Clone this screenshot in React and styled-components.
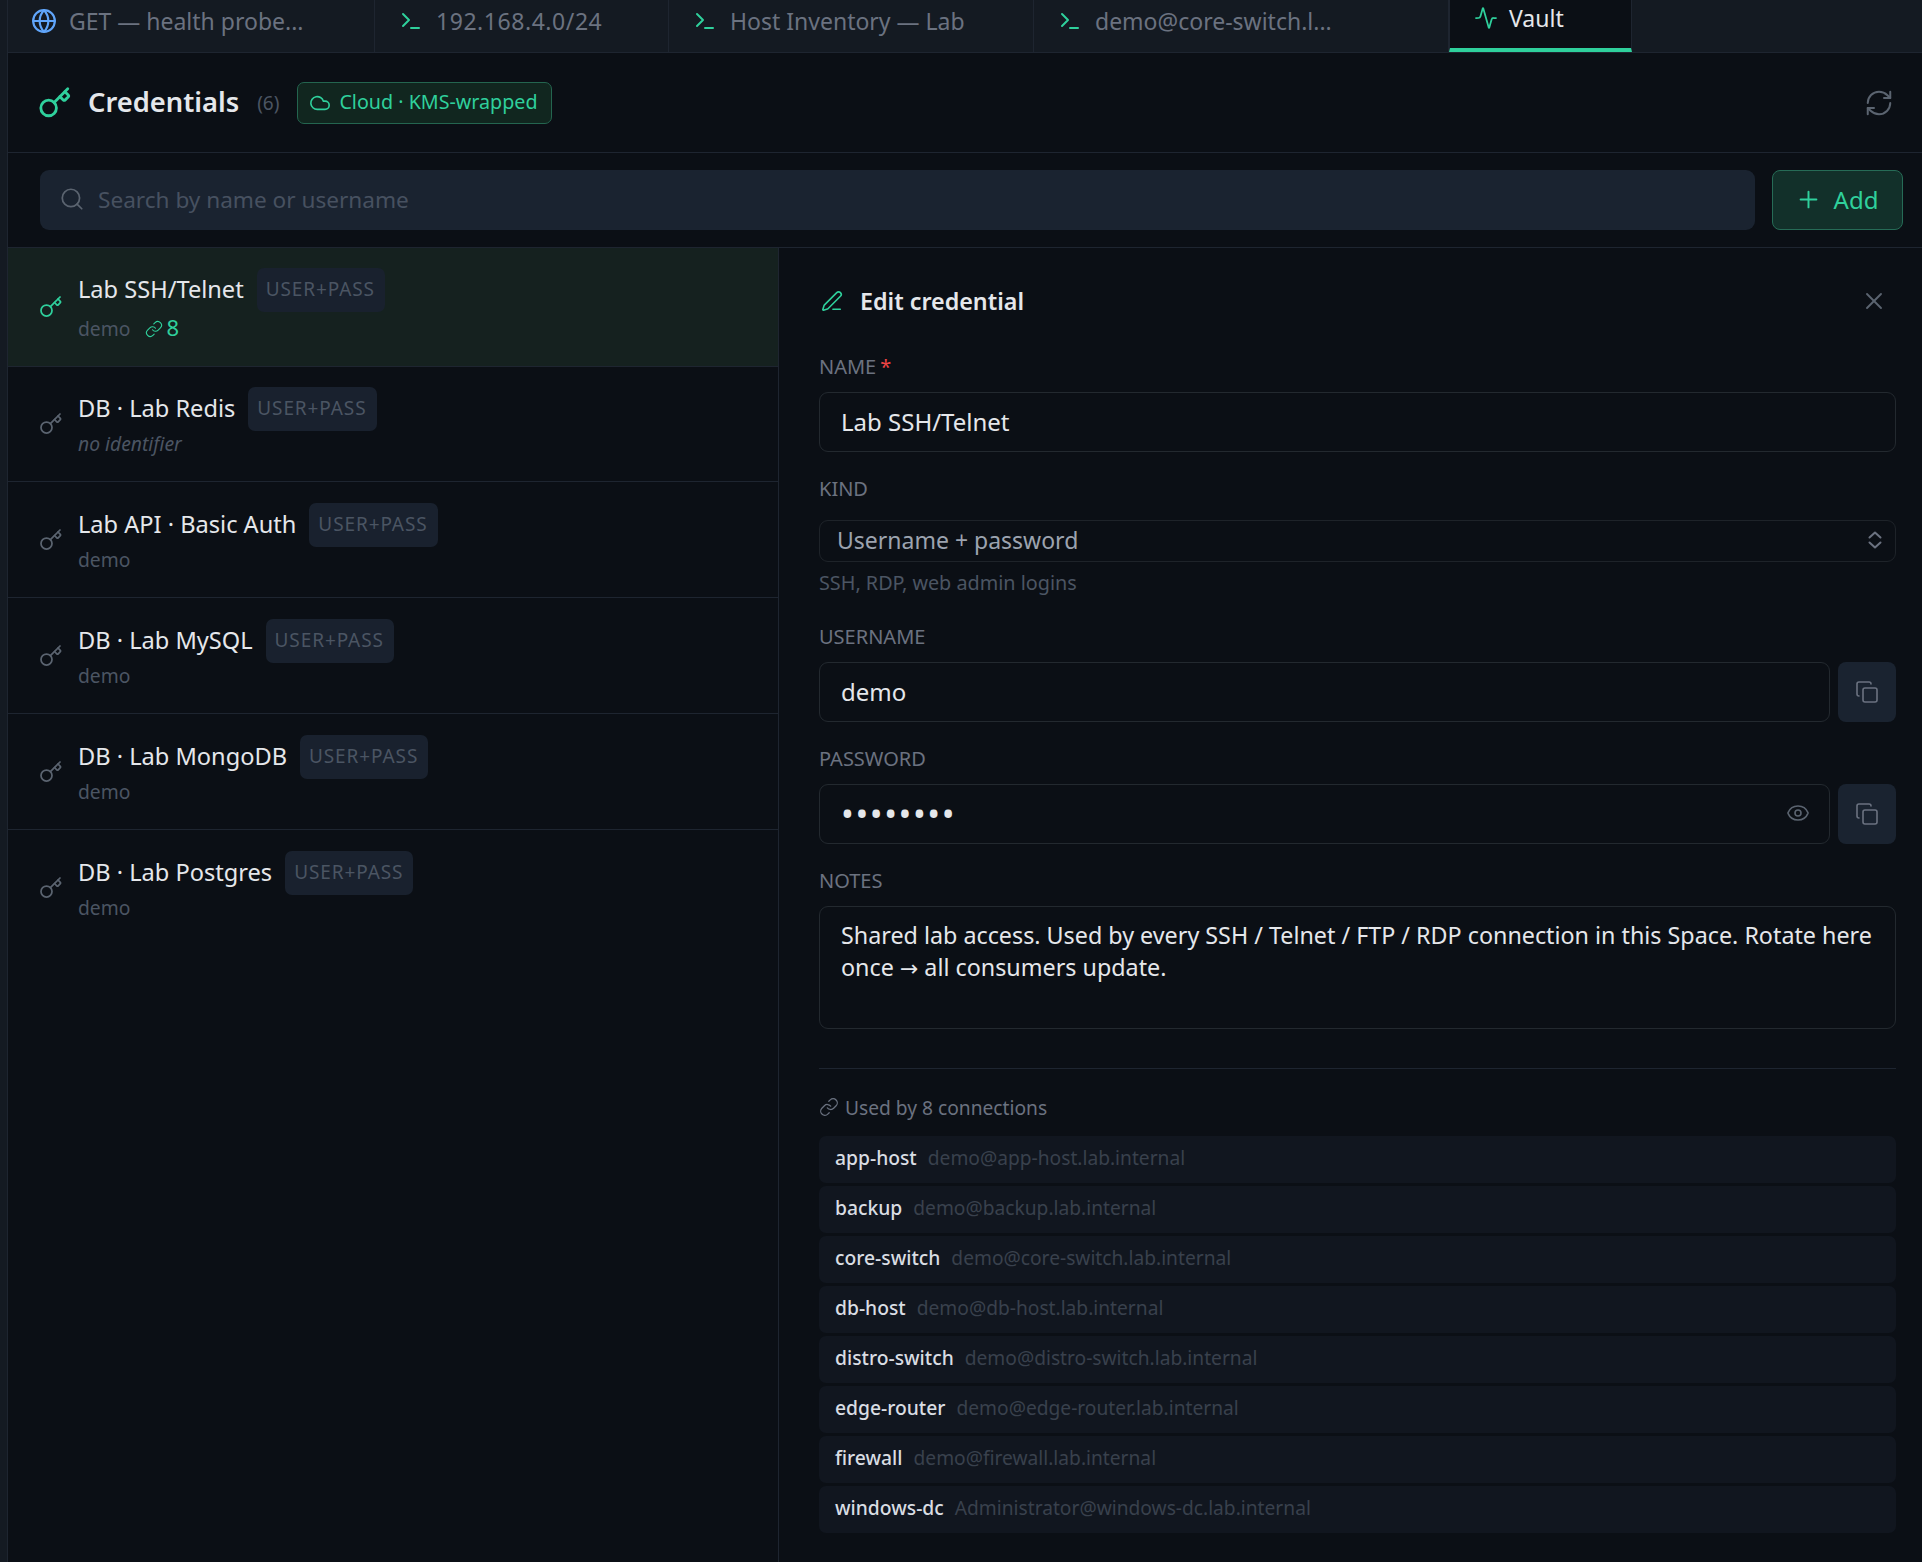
import React from 'react';
import styled, { createGlobalStyle } from 'styled-components';
import {
  Globe, Terminal, Activity, Key, Cloud, RefreshCw, Search, Plus,
  PenLine, X, Copy, Eye, Link,
} from 'lucide-react';

const GREEN = '#2fd09c';

const GlobalStyle = createGlobalStyle`
  html, body { margin: 0; background: #0b0f15; }
  body { font-family: "Noto Sans", "Open Sans", sans-serif; color: #e5e7eb; }
  * { box-sizing: border-box; }
`;

const Shell = styled.div`
  display: flex;
  min-height: 1562px;
`;
const Rail = styled.div`
  width: 8px;
  flex: none;
  background: #141a22;
  border-right: 1px solid #1e2530;
`;
const Main = styled.div`
  flex: 1;
  min-width: 0;
  display: flex;
  flex-direction: column;
`;

const TabBar = styled.div`
  display: flex;
  height: 53px;
  background: #141a22;
  border-bottom: 1px solid #1e2530;
`;
const Tab = styled.div`
  width: ${p => p.$width}px;
  height: 52px;
  display: flex;
  align-items: center;
  gap: ${p => (p.$active ? '10px' : '12px')};
  padding: 0 0 ${p => (p.$active ? '12px' : '10px')} 23px;
  font-size: 23px;
  white-space: nowrap;
  color: ${p => (p.$active ? '#e5e7eb' : '#6b7280')};
  border-right: 1px solid #1e2530;
  ${p => p.$active && `
    background: #0b0f15;
    border-left: 1px solid #1e2530;
    border-bottom: 4px solid ${GREEN};
  `}
`;
const TabIcon = styled.span`
  width: 26px;
  flex: none;
  display: flex;
  justify-content: center;
  color: ${p => p.$color};
`;
const TabTitle = styled.span`
  letter-spacing: ${p => p.$spacing || 0}px;
`;

const Header = styled.div`
  height: 100px;
  display: flex;
  align-items: center;
  padding: 0 28px 0 30px;
  border-bottom: 1px solid #1e2530;
`;
const Title = styled.h1`
  margin: 0 0 2px 16px;
  font-size: 27.3px;
  font-weight: 600;
  color: #e5e7eb;
`;
const Count = styled.span`
  margin-left: 18px;
  font-size: 19px;
  color: #4b5563;
`;
const CloudBadge = styled.div`
  margin-left: 18px;
  height: 42px;
  display: flex;
  align-items: center;
  gap: 8px;
  padding: 0 13px 2px 11px;
  font-size: 19.7px;
  color: ${GREEN};
  background: #11261f;
  border: 1.5px solid #24654f;
  border-radius: 7px;
  svg { margin-top: 3px; }
`;
const Refresh = styled.div`
  margin-left: auto;
  display: flex;
  color: #5b6470;
`;

const Toolbar = styled.div`
  height: 95px;
  display: flex;
  align-items: center;
  gap: 17px;
  padding: 0 19px 0 32px;
  border-bottom: 1px solid #1e2530;
`;
const SearchBox = styled.div`
  flex: 1;
  height: 60px;
  display: flex;
  align-items: center;
  gap: 13px;
  padding: 0 0 2px 19px;
  font-size: 22.6px;
  color: #475160;
  background: #1a2330;
  border-radius: 9px;
`;
const AddButton = styled.button`
  width: 131px;
  height: 60px;
  display: flex;
  align-items: center;
  justify-content: center;
  gap: 12px;
  padding: 0 2px 2px 0;
  font: inherit;
  font-size: 24px;
  color: ${GREEN};
  background: #12302a;
  border: 1.5px solid #266b56;
  border-radius: 8px;
`;

const Columns = styled.div`
  flex: 1;
  display: flex;
`;
const List = styled.div`
  width: 771px;
  flex: none;
  border-right: 1px solid #1e2530;
`;
const ListRow = styled.div`
  height: ${p => p.$height}px;
  display: flex;
  align-items: center;
  gap: 16px;
  padding-left: 31px;
  background: ${p => (p.$active ? '#15211f' : 'transparent')};
  border-bottom: ${p => (p.$last ? 'none' : '1px solid #1e2530')};
  color: ${p => (p.$active ? GREEN : '#5b6470')};
`;
const RowBody = styled.div`
  align-self: flex-start;
  padding-top: ${p => p.$top}px;
  margin-left: -1px;
`;
const NameLine = styled.div`
  height: 44px;
  display: flex;
  align-items: center;
  gap: 13px;
  font-size: 23.6px;
  color: #e5e7eb;
`;
const RowName = styled.span`
  margin-bottom: 2px;
`;
const KindBadge = styled.span`
  height: 44px;
  display: flex;
  align-items: center;
  padding: 0 10px 2px 9px;
  font-size: 19px;
  letter-spacing: 0.9px;
  color: #4b5563;
  background: #19212e;
  border-radius: 7px;
`;
const SubLine = styled.div`
  margin-top: ${p => (p.$linked ? '3px' : '-1px')};
  height: 26px;
  display: flex;
  align-items: center;
  font-size: 19.3px;
  font-style: ${p => (p.$italic ? 'italic' : 'normal')};
  color: #4b5563;
`;
const LinkCount = styled.span`
  margin-left: 15px;
  display: flex;
  align-items: center;
  gap: 3px;
  font-size: 22px;
  line-height: 22px;
  padding-bottom: 3px;
  color: ${GREEN};
  svg { margin-top: 4px; }
`;

const Detail = styled.div`
  flex: 1;
  min-width: 0;
  padding: 37px 26px 0 40px;
`;
const DetailHead = styled.div`
  height: 32px;
  display: flex;
  align-items: center;
  gap: 17px;
  margin-bottom: 37px;
  color: ${GREEN};
`;
const DetailTitle = styled.h2`
  margin: 0;
  font-size: 23.3px;
  font-weight: 600;
  color: #e5e7eb;
`;
const PenIcon = styled.span`
  display: flex;
  margin-left: 2px;
`;
const CloseButton = styled.div`
  margin-left: auto;
  margin-right: 8px;
  display: flex;
  color: #5b6470;
`;
const Form = styled.div`
  display: flex;
  flex-direction: column;
  gap: 24px;
`;
const Label = styled.div`
  height: 26px;
  line-height: 26px;
  margin-bottom: 12px;
  font-size: 20px;
  color: #6b7280;
`;
const Required = styled.span`
  margin-left: 4px;
  color: #ef4444;
`;
const Input = styled.div`
  flex: 1;
  height: 60px;
  display: flex;
  align-items: center;
  padding: 0 19px 2px 21px;
  font-size: 24px;
  color: #e5e7eb;
  border: 1.5px solid #23292f;
  border-radius: 9px;
`;
const Dots = styled.span`
  font-size: 34px;
  line-height: 1;
  letter-spacing: 1.6px;
`;
const EyeButton = styled.span`
  margin-left: auto;
  display: flex;
  color: #5b6470;
`;
const Select = styled.div`
  margin-top: 18px;
  height: 42px;
  display: flex;
  align-items: center;
  justify-content: space-between;
  padding: 0 13px 2px 17px;
  font-size: 23px;
  color: #9ca3af;
  border: 1.5px solid #1e2329;
  border-radius: 9px;
`;
const Hint = styled.div`
  margin: 8px 0 4px;
  height: 26px;
  line-height: 26px;
  font-size: 19.8px;
  color: #4b5563;
`;
const InputRow = styled.div`
  display: flex;
  gap: 8px;
`;
const CopyButton = styled.div`
  width: 58px;
  height: 60px;
  flex: none;
  display: flex;
  align-items: center;
  justify-content: center;
  color: #6b7280;
  background: #1a2330;
  border-radius: 8px;
`;
const Textarea = styled.div`
  height: 123px;
  padding: 12px 19px 0 21px;
  font-size: 23.3px;
  line-height: 32px;
  white-space: nowrap;
  color: #e5e7eb;
  border: 1.5px solid #23292f;
  border-radius: 9px;
`;
const Arrow = styled.span`
  font-family: "DejaVu Sans", sans-serif;
  font-size: 22px;
`;
const Divider = styled.hr`
  margin: 39px 0 25px;
  border: 0;
  border-top: 1.5px solid #1e2530;
`;
const UsedBy = styled.div`
  height: 26px;
  display: flex;
  align-items: center;
  gap: 6px;
  margin-bottom: 16px;
  font-size: 19.2px;
  color: #6b7280;
`;
const Connections = styled.div`
  display: flex;
  flex-direction: column;
  gap: 3px;
`;
const Connection = styled.div`
  height: 47px;
  display: flex;
  align-items: center;
  gap: 11px;
  padding: 0 0 4px 16px;
  background: #11161f;
  border-radius: 7px;
`;
const ConnName = styled.span`
  font-size: 19.3px;
  font-weight: 500;
  color: #d9dde3;
`;
const ConnHost = styled.span`
  font-size: 19.2px;
  color: #39414d;
`;

const tabs = [
  { title: 'GET — health probe...', width: 367, Icon: Globe, size: 26, color: '#60a5fa' },
  { title: '192.168.4.0/24', width: 294, Icon: Terminal, size: 24, color: GREEN, spacing: 0.55 },
  { title: 'Host Inventory — Lab', width: 365, Icon: Terminal, size: 24, color: GREEN },
  { title: 'demo@core-switch.l...', width: 415, Icon: Terminal, size: 24, color: GREEN },
  { title: 'Vault', width: 183, Icon: Activity, size: 24, color: GREEN, active: true },
];

const credentials = [
  { name: 'Lab SSH/Telnet', sub: 'demo', links: 8, height: 119, top: 20 },
  { name: 'DB · Lab Redis', sub: 'no identifier', italic: true, height: 115, top: 20 },
  { name: 'Lab API · Basic Auth', sub: 'demo', height: 116, top: 21 },
  { name: 'DB · Lab MySQL', sub: 'demo', height: 116, top: 21 },
  { name: 'DB · Lab MongoDB', sub: 'demo', height: 116, top: 21 },
  { name: 'DB · Lab Postgres', sub: 'demo', height: 116, top: 21, last: true },
];

const connections = [
  ['app-host', 'demo@app-host.lab.internal'],
  ['backup', 'demo@backup.lab.internal'],
  ['core-switch', 'demo@core-switch.lab.internal'],
  ['db-host', 'demo@db-host.lab.internal'],
  ['distro-switch', 'demo@distro-switch.lab.internal'],
  ['edge-router', 'demo@edge-router.lab.internal'],
  ['firewall', 'demo@firewall.lab.internal'],
  ['windows-dc', 'Administrator@windows-dc.lab.internal'],
];

function UpDown() {
  return (
    <svg width="14" height="18" viewBox="0 0 14 18" fill="none" stroke="#6b7280" strokeWidth="2" strokeLinecap="round" strokeLinejoin="round">
      <path d="M1.5 6.5 7 1.5l5.500 5" />
      <path d="M1.500 11.500 7 16.500l5.500-5" />
    </svg>
  );
}

export default function App() {
  return (
    <Shell>
      <GlobalStyle />
      <Rail />
      <Main>
        <TabBar>
          {tabs.map(t => (
            <Tab key={t.title} $width={t.width} $active={t.active}>
              <TabIcon $color={t.color}><t.Icon size={t.size} strokeWidth={t.active ? 1.75 : 2} /></TabIcon>
              <TabTitle $spacing={t.spacing}>{t.title}</TabTitle>
            </Tab>
          ))}
        </TabBar>

        <Header>
          <Key size={34} color={GREEN} strokeWidth={2} />
          <Title>Credentials</Title>
          <Count>(6)</Count>
          <CloudBadge><Cloud size={22} strokeWidth={1.75} />Cloud · KMS-wrapped</CloudBadge>
          <Refresh><RefreshCw size={30} strokeWidth={1.6} /></Refresh>
        </Header>

        <Toolbar>
          <SearchBox><Search size={26} strokeWidth={1.6} color="#5b6470" />Search by name or username</SearchBox>
          <AddButton><Plus size={27} strokeWidth={1.75} />Add</AddButton>
        </Toolbar>

        <Columns>
          <List>
            {credentials.map((c, i) => (
              <ListRow key={c.name} $height={c.height} $active={i === 0} $last={c.last}>
                <Key size={24} strokeWidth={1.75} />
                <RowBody $top={c.top}>
                  <NameLine><RowName>{c.name}</RowName><KindBadge>USER+PASS</KindBadge></NameLine>
                  <SubLine $italic={c.italic} $linked={c.links}>
                    {c.sub}
                    {c.links && <LinkCount><Link size={18} strokeWidth={1.5} />{c.links}</LinkCount>}
                  </SubLine>
                </RowBody>
              </ListRow>
            ))}
          </List>

          <Detail>
            <DetailHead>
              <PenIcon><PenLine size={22} strokeWidth={1.75} /></PenIcon>
              <DetailTitle>Edit credential</DetailTitle>
              <CloseButton><X size={28} strokeWidth={1.6} /></CloseButton>
            </DetailHead>

            <Form>
              <div>
                <Label>NAME<Required>*</Required></Label>
                <Input>Lab SSH/Telnet</Input>
              </div>
              <div>
                <Label>KIND</Label>
                <Select>Username + password<UpDown /></Select>
                <Hint>SSH, RDP, web admin logins</Hint>
              </div>
              <div>
                <Label>USERNAME</Label>
                <InputRow>
                  <Input>demo</Input>
                  <CopyButton><Copy size={24} strokeWidth={1.6} /></CopyButton>
                </InputRow>
              </div>
              <div>
                <Label>PASSWORD</Label>
                <InputRow>
                  <Input>
                    <Dots>••••••••</Dots>
                    <EyeButton><Eye size={24} strokeWidth={1.6} /></EyeButton>
                  </Input>
                  <CopyButton><Copy size={24} strokeWidth={1.6} /></CopyButton>
                </InputRow>
              </div>
              <div>
                <Label>NOTES</Label>
                <Textarea>
                  Shared lab access. Used by every SSH / Telnet / FTP / RDP connection in this Space. Rotate here<br />
                  once <Arrow>→</Arrow> all consumers update.
                </Textarea>
              </div>
            </Form>

            <Divider />
            <UsedBy><Link size={20} strokeWidth={1.5} />Used by 8 connections</UsedBy>
            <Connections>
              {connections.map(([name, host]) => (
                <Connection key={name}>
                  <ConnName>{name}</ConnName>
                  <ConnHost>{host}</ConnHost>
                </Connection>
              ))}
            </Connections>
          </Detail>
        </Columns>
      </Main>
    </Shell>
  );
}
